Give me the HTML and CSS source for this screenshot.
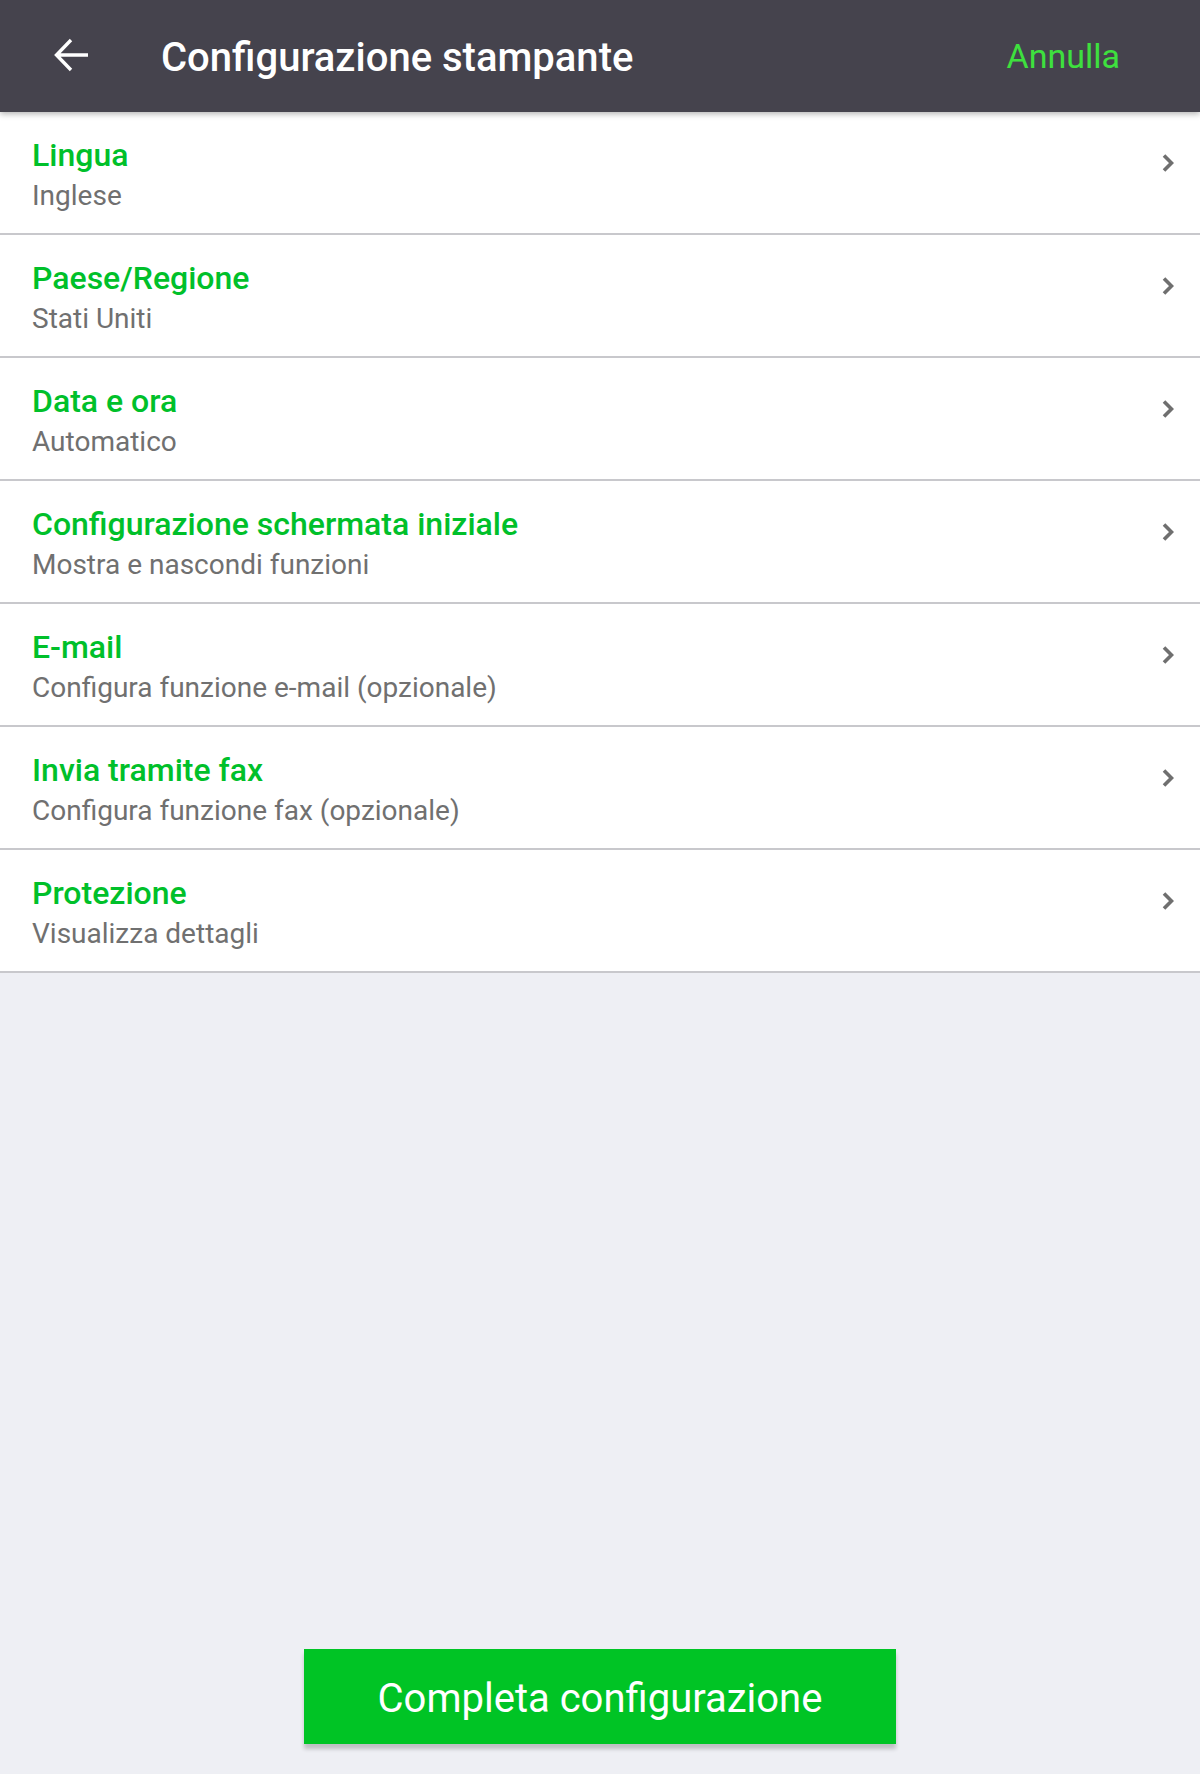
FILE: index.html
```html
<!DOCTYPE html>
<html lang="it">
<head>
<meta charset="utf-8">
<title>Configurazione stampante</title>
<link rel="stylesheet" href="styles.css">
</head>
<body>
<div class="screen">
  <header class="topbar">
    <button class="back" aria-label="Indietro">
      <svg width="36" height="34" viewBox="0 0 36 34"><path d="M34 17H3M17 2L2.5 17 17 32" fill="none" stroke="#ffffff" stroke-width="3.4" stroke-linecap="butt" stroke-linejoin="miter"/></svg>
    </button>
    <h1 class="title">Configurazione stampante</h1>
    <span class="cancel">Annulla</span>
  </header>
  <main class="list">
    <div class="row"><div class="text"><div class="label">Lingua</div><div class="value">Inglese</div></div><svg class="chev" width="12" height="18" viewBox="0 0 12 18"><path d="M2 1.5L9.5 9 2 16.5" fill="none" stroke="#6f6f6f" stroke-width="3.6"/></svg></div>
    <div class="row"><div class="text"><div class="label">Paese/Regione</div><div class="value">Stati Uniti</div></div><svg class="chev" width="12" height="18" viewBox="0 0 12 18"><path d="M2 1.5L9.5 9 2 16.5" fill="none" stroke="#6f6f6f" stroke-width="3.6"/></svg></div>
    <div class="row"><div class="text"><div class="label">Data e ora</div><div class="value">Automatico</div></div><svg class="chev" width="12" height="18" viewBox="0 0 12 18"><path d="M2 1.5L9.5 9 2 16.5" fill="none" stroke="#6f6f6f" stroke-width="3.6"/></svg></div>
    <div class="row"><div class="text"><div class="label">Configurazione schermata iniziale</div><div class="value">Mostra e nascondi funzioni</div></div><svg class="chev" width="12" height="18" viewBox="0 0 12 18"><path d="M2 1.5L9.5 9 2 16.5" fill="none" stroke="#6f6f6f" stroke-width="3.6"/></svg></div>
    <div class="row"><div class="text"><div class="label">E-mail</div><div class="value">Configura funzione e-mail (opzionale)</div></div><svg class="chev" width="12" height="18" viewBox="0 0 12 18"><path d="M2 1.5L9.5 9 2 16.5" fill="none" stroke="#6f6f6f" stroke-width="3.6"/></svg></div>
    <div class="row"><div class="text"><div class="label">Invia tramite fax</div><div class="value">Configura funzione fax (opzionale)</div></div><svg class="chev" width="12" height="18" viewBox="0 0 12 18"><path d="M2 1.5L9.5 9 2 16.5" fill="none" stroke="#6f6f6f" stroke-width="3.6"/></svg></div>
    <div class="row"><div class="text"><div class="label">Protezione</div><div class="value">Visualizza dettagli</div></div><svg class="chev" width="12" height="18" viewBox="0 0 12 18"><path d="M2 1.5L9.5 9 2 16.5" fill="none" stroke="#6f6f6f" stroke-width="3.6"/></svg></div>
  </main>
  <footer class="footer">
    <button class="finish">Completa configurazione</button>
  </footer>
</div>
</body>
</html>
```
FILE: styles.css
```css
* { box-sizing: border-box; }
html, body { margin: 0; padding: 0; }
body {
  width: 1200px;
  height: 1774px;
  background: #eeeff4;
  font-family: Roboto, "Noto Sans", sans-serif;
  overflow: hidden;
}
.screen {
  height: 1774px;
  display: flex;
  flex-direction: column;
}
.topbar {
  height: 112px;
  background: #45434d;
  display: flex;
  align-items: center;
  padding: 0 0 0 54px;
  position: relative;
  z-index: 2;
  box-shadow: 0 2px 6px rgba(0,0,0,0.3);
  flex: none;
}
.back {
  background: none;
  border: 0;
  padding: 0;
  width: 36px;
  height: 34px;
  display: flex;
  margin-top: -2px;
}
.title {
  margin: 0 0 0 71px;
  font-size: 40px;
  font-weight: 500;
  color: #ffffff;
  flex: 1;
  letter-spacing: 0;
  padding-top: 2px;
}
.cancel {
  color: #3ee03e;
  font-size: 34px;
  margin-right: 80px;
}
.list {
  background: #ffffff;
  flex: none;
}
.row {
  height: 123px;
  border-bottom: 2px solid #c8c8cc;
  display: flex;
  align-items: center;
  padding: 0 26px 0 32px;
}
.text { flex: 1; padding-top: 5px; }
.label {
  color: #00c02a;
  font-size: 32px;
  font-weight: 500;
  line-height: 41px;
}
.value {
  color: #707070;
  font-size: 28px;
  line-height: 40px;
}
.chev {
  flex: none;
  margin-bottom: 20px;
}
.footer {
  flex: 1;
  display: flex;
  align-items: flex-end;
  justify-content: center;
  padding-bottom: 30px;
}
.finish {
  width: 592px;
  height: 95px;
  background: #00c425;
  border: 0;
  color: #ffffff;
  font-family: Roboto, "Noto Sans", sans-serif;
  font-size: 40px;
  padding-top: 4px;
  box-shadow: 0 5px 4px rgba(0,0,0,0.2);
}
```
